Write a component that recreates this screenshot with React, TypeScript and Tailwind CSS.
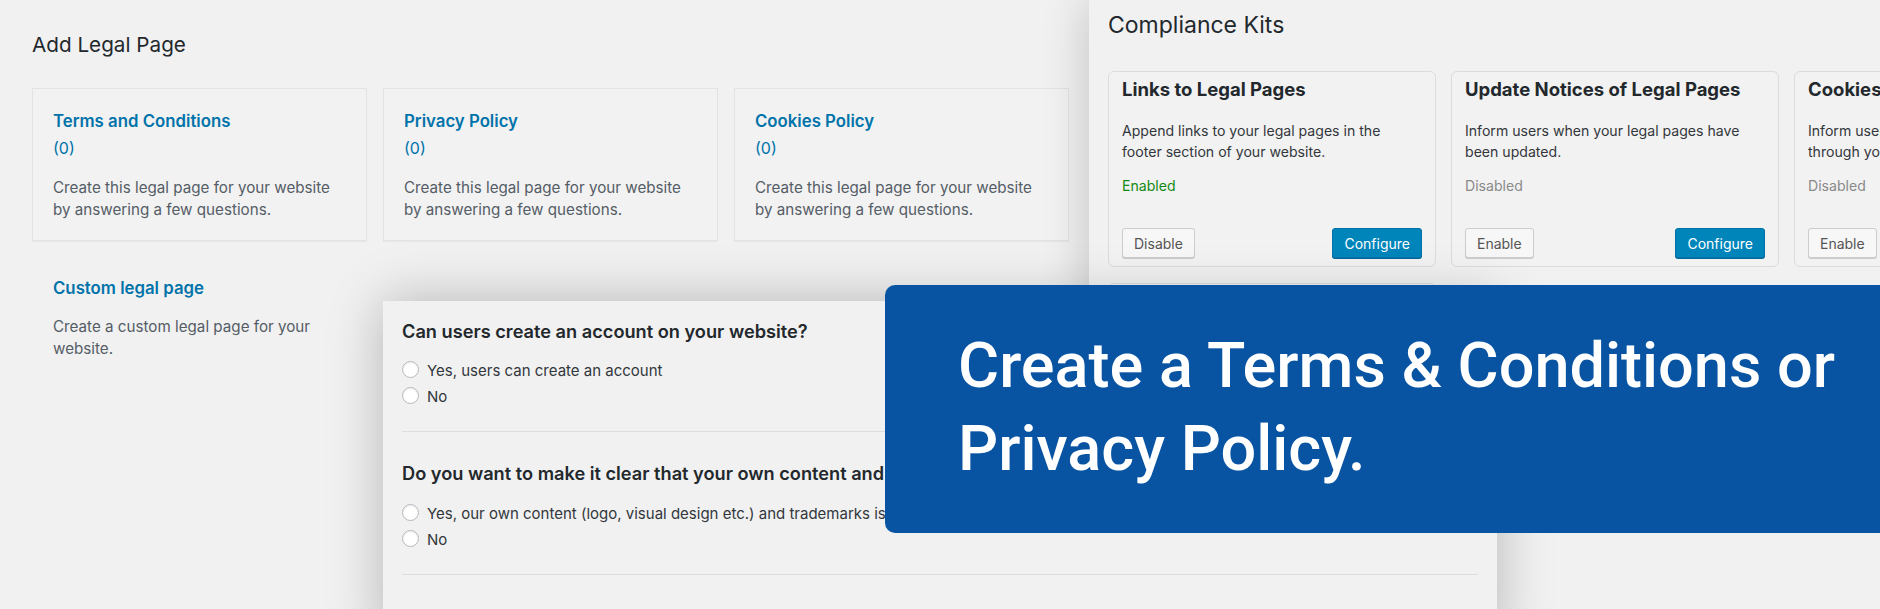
import React from "react";

const legalCards = [
  { title: "Terms and Conditions", count: "(0)", lines: ["Create this legal page for your website", "by answering a few questions."] },
  { title: "Privacy Policy", count: "(0)", lines: ["Create this legal page for your website", "by answering a few questions."] },
  { title: "Cookies Policy", count: "(0)", lines: ["Create this legal page for your website", "by answering a few questions."] },
];

type Kit = {
  title: string;
  lines: string[];
  enabled: boolean;
  configure: boolean;
};

const kits: Kit[] = [
  { title: "Links to Legal Pages", lines: ["Append links to your legal pages in the", "footer section of your website."], enabled: true, configure: true },
  { title: "Update Notices of Legal Pages", lines: ["Inform users when your legal pages have", "been updated."], enabled: false, configure: true },
  { title: "Cookies Consent Banner", lines: ["Inform users about the use of cookies", "through your website's consent banner."], enabled: false, configure: true },
  { title: "Age Verification", lines: ["Ask visitors to confirm their age before", "they can access your website."], enabled: false, configure: false },
];

function Radio({ label }: { label: string }) {
  return (
    <div className="flex h-[26px] items-center whitespace-nowrap">
      <span className="mb-[3px] mr-[8px] inline-block h-[17px] w-[17px] shrink-0 rounded-full border border-[#b4b9be] bg-white shadow-[inset_0_1px_2px_rgba(0,0,0,0.08)]" />
      <span className="text-[15px] leading-[26px] text-[#32373c]">{label}</span>
    </div>
  );
}

function KitCard({ kit }: { kit: Kit }) {
  return (
    <div className="flex h-[196px] w-[328px] shrink-0 flex-col rounded-[6px] border border-[#dcdcdc] bg-[#f2f2f2] px-[13px] pb-[8px] pt-[5px]">
      <div className="whitespace-nowrap text-[18.5px] font-bold leading-[24px] text-[#23282d]">{kit.title}</div>
      <div className="mt-[19px] whitespace-nowrap text-[14.1px] leading-[21px] text-[#32373c]">
        {kit.lines.map((l) => (
          <div key={l}>{l}</div>
        ))}
      </div>
      <div className={`mt-[13px] text-[14.1px] leading-[21px] ${kit.enabled ? "text-[#138a13]" : "text-[#8a8a8a]"}`}>
        {kit.enabled ? "Enabled" : "Disabled"}
      </div>
      <div className="mt-auto flex items-center justify-between">
        <button className="h-[30px] rounded-[3px] border border-[#cccccc] bg-[#f7f7f7] px-[11px] text-[14px] text-[#555555] shadow-[0_1px_0_#cccccc]">
          {kit.enabled ? "Disable" : "Enable"}
        </button>
        {kit.configure && (
          <button className="h-[30px] rounded-[3px] border border-[#0073aa] bg-[#0085ba] px-[11px] text-[14px] text-white shadow-[0_1px_0_#006799]">
            Configure
          </button>
        )}
      </div>
    </div>
  );
}

export default function App() {
  return (
    <div className="relative h-[609px] w-[1880px] overflow-hidden bg-[#f1f1f1] font-['Inter',sans-serif]">
      {/* Add Legal Page screen */}
      <div className="pl-[32px] pt-[31px]">
        <h1 className="text-[20.7px] leading-[28px] text-[#23282d]">Add Legal Page</h1>
        <div className="mt-[29px] grid grid-cols-[repeat(3,335px)] gap-x-[16px] gap-y-[16px]">
          {legalCards.map((c) => (
            <div key={c.title} className="h-[153px] border border-[#e3e3e3] bg-[#f2f2f2] pl-[20px] pr-[10px] pt-[18.5px] shadow-[0_1px_1px_rgba(0,0,0,0.04)]">
              <div className="text-[16.8px] font-semibold leading-[27px] text-[#0073aa]">{c.title}</div>
              <div className="text-[16px] leading-[27px] text-[#0073aa]">{c.count}</div>
              <div className="mt-[15px] whitespace-nowrap text-[15.2px] leading-[22.5px] text-[#555d66]">
                {c.lines.map((l) => (
                  <div key={l}>{l}</div>
                ))}
              </div>
            </div>
          ))}
          <div className="h-[153px] border border-transparent pl-[20px] pt-[16.5px]">
            <div className="text-[16.8px] font-semibold leading-[27px] text-[#0073aa]">Custom legal page</div>
            <div className="mt-[14.5px] whitespace-nowrap text-[15.2px] leading-[22px] text-[#555d66]">
              <div>Create a custom legal page for your</div>
              <div>website.</div>
            </div>
          </div>
        </div>
      </div>

      {/* Compliance Kits screen */}
      <div className="absolute left-[1089px] top-0 h-[609px] w-[1000px] bg-[#f1f1f1] pl-[19px] pt-[10px] shadow-[0_0_45px_rgba(0,0,0,0.2)]">
        <h2 className="text-[23px] leading-[30px] text-[#23282d]">Compliance Kits</h2>
        <div className="mt-[31px] flex w-[1014px] flex-wrap gap-x-[15px] gap-y-[16px]">
          {kits.map((k) => (
            <KitCard key={k.title} kit={k} />
          ))}
        </div>
      </div>

      {/* Questionnaire screen */}
      <div className="absolute left-[383px] top-[301px] h-[340px] w-[1114px] bg-[#f1f1f1] px-[19px] pt-[18px] shadow-[0_0_50px_rgba(0,0,0,0.25)]">
        <div className="whitespace-nowrap text-[18.2px] font-semibold leading-[24px] text-[#23282d]">
          Can users create an account on your website?
        </div>
        <div className="mt-[15px]">
          <Radio label="Yes, users can create an account" />
          <Radio label="No" />
        </div>
        <div className="mt-[21px] h-px bg-[#dddddd]" />
        <div className="mt-[29px] whitespace-nowrap text-[18.2px] font-semibold leading-[24px] text-[#23282d]">
          Do you want to make it clear that your own content and trademarks are protected?
        </div>
        <div className="mt-[16px]">
          <Radio label="Yes, our own content (logo, visual design etc.) and trademarks is protected" />
          <Radio label="No" />
        </div>
        <div className="mt-[21px] h-px bg-[#dddddd]" />
      </div>

      {/* Banner */}
      <div className="absolute left-[885px] top-[285px] h-[248px] w-[1000px] rounded-l-[10px] bg-[#0854a2] pl-[73px] pt-[39px] font-['Roboto',sans-serif] text-[63px] font-medium leading-[83px] whitespace-nowrap text-white">
        Create a Terms &amp; Conditions or
        <br />
        Privacy Policy.
      </div>
    </div>
  );
}
